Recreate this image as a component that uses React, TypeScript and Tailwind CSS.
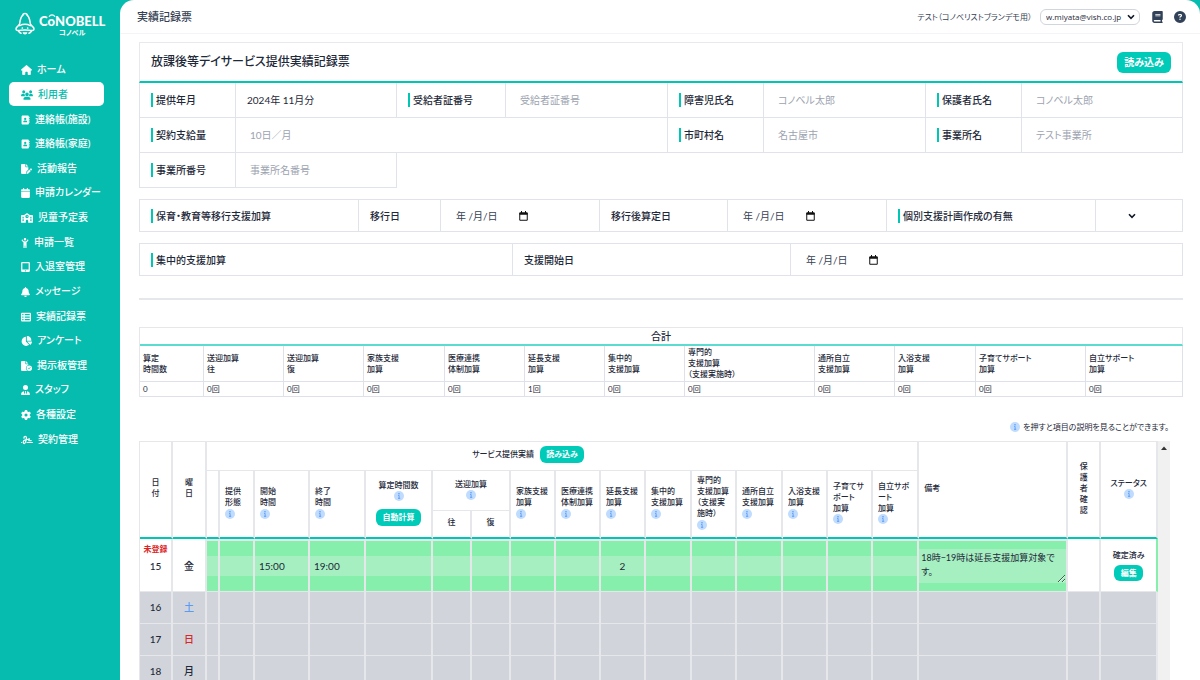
import { Fragment, useState, type ReactNode } from 'react';
import type { IconType } from 'react-icons';
import {
  FaAddressBook,
  FaBell,
  FaBook,
  FaCalendar,
  FaChartPie,
  FaChildReaching,
  FaCircleQuestion,
  FaFileCircleCheck,
  FaFilePen,
  FaGear,
  FaHouse,
  FaSchool,
  FaSignature,
  FaTableList,
  FaTabletScreenButton,
  FaUserTie,
  FaUsers,
} from 'react-icons/fa6';

const NAV: { label: string; icon: IconType; size: string; active?: boolean }[] = [
  { label: 'ホーム', icon: FaHouse, size: 'w-[11px]' },
  { label: '利用者', icon: FaUsers, size: 'w-3', active: true },
  { label: '連絡帳(施設)', icon: FaAddressBook, size: 'w-[9px]' },
  { label: '連絡帳(家庭)', icon: FaAddressBook, size: 'w-[9px]' },
  { label: '活動報告', icon: FaFilePen, size: 'w-[11px]' },
  { label: '申請カレンダー', icon: FaCalendar, size: 'w-[9px]' },
  { label: '児童予定表', icon: FaSchool, size: 'w-3' },
  { label: '申請一覧', icon: FaChildReaching, size: 'w-2' },
  { label: '入退室管理', icon: FaTabletScreenButton, size: 'w-[9px]' },
  { label: 'メッセージ', icon: FaBell, size: 'w-[9px]' },
  { label: '実績記録票', icon: FaTableList, size: 'w-[10px]' },
  { label: 'アンケート', icon: FaChartPie, size: 'w-[11px]' },
  { label: '掲示板管理', icon: FaFileCircleCheck, size: 'w-[11px]' },
  { label: 'スタッフ', icon: FaUserTie, size: 'w-[9px]' },
  { label: '各種設定', icon: FaGear, size: 'w-[10px]' },
  { label: '契約管理', icon: FaSignature, size: 'w-3' },
];

const TOTALS: { lines: string[]; value: string; width: number }[] = [
  { lines: ['算定', '時間数'], value: '0', width: 64 },
  { lines: ['送迎加算', '往'], value: '0回', width: 80 },
  { lines: ['送迎加算', '復'], value: '0回', width: 80 },
  { lines: ['家族支援', '加算'], value: '0回', width: 81 },
  { lines: ['医療連携', '体制加算'], value: '0回', width: 80 },
  { lines: ['延長支援', '加算'], value: '1回', width: 80 },
  { lines: ['集中的', '支援加算'], value: '0回', width: 80 },
  { lines: ['専門的', '支援加算', '（支援実施時）'], value: '0回', width: 130 },
  { lines: ['通所自立', '支援加算'], value: '0回', width: 80 },
  { lines: ['入浴支援', '加算'], value: '0回', width: 81 },
  { lines: ['子育てサポート', '加算'], value: '0回', width: 110 },
  { lines: ['自立サポート', '加算'], value: '0回', width: 97 },
];

const RECORD_WIDTHS = [33, 34, 13, 35, 55, 56, 67, 39, 39, 45, 45, 45, 46, 45, 46, 45, 45, 46, 149, 33, 57];

const ADDITIONS: string[][] = [
  ['家族支援', '加算'],
  ['医療連携', '体制加算'],
  ['延長支援', '加算'],
  ['集中的', '支援加算'],
  ['専門的', '支援加算', '（支援実', '施時）'],
  ['通所自立', '支援加算'],
  ['入浴支援', '加算'],
  ['子育てサ', 'ポート', '加算'],
  ['自立サポ', 'ート', '加算'],
];

const ENTRY_FIELDS: { name: string; value: string; center?: boolean }[] = [
  { name: '区分', value: '' },
  { name: '提供形態', value: '' },
  { name: '開始時間', value: '15:00' },
  { name: '終了時間', value: '19:00' },
  { name: '算定時間数', value: '' },
  { name: '送迎加算 往', value: '' },
  { name: '送迎加算 復', value: '' },
  { name: '家族支援加算', value: '' },
  { name: '医療連携体制加算', value: '' },
  { name: '延長支援加算', value: '2', center: true },
  { name: '集中的支援加算', value: '' },
  { name: '専門的支援加算', value: '' },
  { name: '通所自立支援加算', value: '' },
  { name: '入浴支援加算', value: '' },
  { name: '子育てサポート加算', value: '' },
  { name: '自立サポート加算', value: '' },
];

const CLOSED_DAYS = [
  { day: '16', weekday: '土', color: 'text-[#5a9cf4]' },
  { day: '17', weekday: '日', color: 'text-[#dc2626]' },
  { day: '18', weekday: '月', color: 'text-gray-800' },
];

function Lines({ items }: { items: string[] }) {
  return (
    <>
      {items.map((line, i) => (
        <Fragment key={i}>
          {i > 0 && <br />}
          {line}
        </Fragment>
      ))}
    </>
  );
}

function InfoIcon() {
  return (
    <svg viewBox="0 0 18 18" className="inline-block size-[10px] shrink-0" aria-hidden="true">
      <circle cx="9" cy="9" r="9" fill="#bfdbfe" />
      <circle cx="9" cy="5" r="1.3" fill="#4c93f7" />
      <path d="M7.4 8H9.200v5.200M7.200 13.200h4" fill="none" stroke="#4c93f7" strokeWidth="1.4" />
    </svg>
  );
}

function Chevron() {
  return (
    <svg viewBox="0 0 8 6" className="h-[6px] w-2" aria-hidden="true">
      <path d="M1 1.2 4 4.4 7 1.2" fill="none" stroke="#111827" strokeWidth="1.6" />
    </svg>
  );
}

function Logo() {
  return (
    <a href="#" className="flex h-10 items-start gap-1 pl-[15px] pt-3 text-white">
      <svg viewBox="0 0 60 70" className="h-6 w-5 shrink-0" aria-hidden="true">
        <g fill="none" stroke="#fff" strokeWidth="4.6" strokeLinecap="round" strokeLinejoin="round">
          <path d="M23 9c1-7 13-7 14 0" />
          <path d="M23 9C16 15 15 26 14 34 12 42 3 43 3 50c0 8 14 3 27 3s27 5 27-3c0-7-9-8-11-16-1-8-2-19-9-25" />
          <path d="M14 40c10-5 22-5 32 0" />
          <path d="M11 57c2 3 4 5 7 6M49 57c-2 3-4 5-7 6" />
        </g>
        <circle cx="22" cy="47" r="2.600" fill="#fff" />
        <circle cx="38" cy="47" r="2.600" fill="#fff" />
        <path d="M23 60h14c0 9-14 9-14 0Z" fill="#fff" />
      </svg>
      <span className="flex flex-col items-center pt-[2px]">
        <span className="flex items-baseline font-[Lato] text-[13px] leading-[14px] font-black">
          C
          <span className="relative">
            o
            <svg viewBox="0 0 14 8" className="absolute top-0 left-0 h-1 w-2" aria-hidden="true">
              <path d="M1 5.500c3-5 9-5 12 0" fill="none" stroke="#fff" strokeWidth="2.200" />
            </svg>
          </span>
          NOBELL
        </span>
        <span className="text-[7px] leading-[9px] font-bold">コノベル</span>
      </span>
    </a>
  );
}

function Label({ children, htmlFor }: { children: ReactNode; htmlFor?: string }) {
  return (
    <label htmlFor={htmlFor} className="flex items-center border-r border-b border-[#e1e3ea] pl-[11px] font-medium">
      <span className="border-l-2 border-[#00c7b5] pl-[3px] leading-[14px]">{children}</span>
    </label>
  );
}

function PlainLabel({ children, htmlFor }: { children: ReactNode; htmlFor: string }) {
  return (
    <label htmlFor={htmlFor} className="flex items-center border-r border-b border-[#e1e3ea] pl-[11px] font-medium">
      {children}
    </label>
  );
}

function TextCell({ id, placeholder, className = '' }: { id: string; placeholder: string; className?: string }) {
  return (
    <div className={`flex items-center border-r border-b border-[#e1e3ea] ${className}`}>
      <input id={id} placeholder={placeholder} className="w-full bg-transparent px-[14px] outline-none placeholder:text-[#9ca3af]" />
    </div>
  );
}

function DateCell({ id }: { id: string }) {
  return (
    <div className="flex items-center border-r border-b border-[#e1e3ea] pl-[15px]">
      <input id={id} defaultValue="年 /月/日" className="w-[63px] bg-transparent text-gray-700 outline-none" />
      <button type="button" aria-label="日付を選択">
        <svg viewBox="0 0 18 20" className="h-[10px] w-[9px]" aria-hidden="true">
          <path d="M1.500 4h15v14.500h-15Z" fill="none" stroke="#111" strokeWidth="2" />
          <path d="M1 3h16v4.500H1ZM4 0h2v4H4ZM12 0h2v4h-2Z" fill="#111" />
        </svg>
      </button>
    </div>
  );
}

const HEAD = 'border-r-2 border-b-2 border-r-[#e5e7eb] border-b-[#00c7b5] p-0 pb-[3px] font-medium';

export default function App() {
  const [note, setNote] = useState('18時−19時は延長支援加算対象です。');

  return (
    <div className="flex h-screen overflow-hidden bg-[#06bcae] font-['Lato','Noto_Sans_CJK_JP',sans-serif] text-[10px] leading-[14px] text-gray-800 [font-feature-settings:'palt']">
      <aside className="w-[120px] shrink-0">
        <Logo />
        <nav className="mt-[17px] grid h-[394px] auto-rows-fr px-[9px] pr-4">
          {NAV.map(({ label, icon: Icon, size, active }) => (
            <a
              key={label}
              href="#"
              className={`flex items-center gap-[5px] rounded-[5px] pl-3 font-medium whitespace-nowrap ${
                active ? 'bg-white text-[#06bcae]' : 'text-white'
              }`}
            >
              <Icon className={`mt-[2px] h-[10px] shrink-0 ${size}`} />
              {label}
            </a>
          ))}
        </nav>
      </aside>

      <main className="flex min-w-0 flex-1 flex-col rounded-t-[14px] bg-white">
        <header className="flex h-[34px] shrink-0 items-center border-b border-gray-100 pr-[14px] pl-[17px]">
          <h1 className="text-[11px] font-medium text-gray-700">実績記録票</h1>
          <span className="ml-auto text-[8px] text-gray-700">テスト（コノベリストブランデモ用）</span>
          <div className="relative ml-2">
            <select
              aria-label="アカウント"
              className="h-4 w-[100px] appearance-none rounded-md border border-gray-300 bg-white pl-[5px] font-['Open_Sans'] text-[8px] leading-[14px] text-gray-800"
            >
              <option>w.miyata@vish.co.jp</option>
            </select>
            <span className="pointer-events-none absolute top-[5px] right-[5px]">
              <Chevron />
            </span>
          </div>
          <button type="button" aria-label="マニュアル" className="ml-3 text-slate-700">
            <FaBook className="h-3 w-[11px]" />
          </button>
          <button type="button" aria-label="ヘルプ" className="ml-[11px] text-slate-700">
            <FaCircleQuestion className="size-3" />
          </button>
        </header>

        <div className="flex min-h-0 flex-1 flex-col pt-2 pr-[17px] pl-[19px]">
          <section className="shrink-0">
            <div className="flex h-[41px] items-center justify-between border border-b-2 border-[#e8e9ed] border-b-[#00c7b5] px-[11px]">
              <h2 className="text-[12px] font-medium">放課後等デイサービス提供実績記録票</h2>
              <button type="button" className="h-[21px] w-[54px] rounded-md bg-[#00cbb9] font-bold text-white">
                読み込み
              </button>
            </div>
            <div className="grid auto-rows-[35px] grid-cols-[96fr_161fr_109fr_162fr_96fr_162fr_96fr_161fr] border-l border-[#e1e3ea]">
              <Label htmlFor="month">提供年月</Label>
              <div className="flex items-center border-r border-b border-[#e1e3ea]">
                <input id="month" defaultValue="2024年 11月分" className="w-full bg-transparent px-[11px] outline-none" />
              </div>
              <Label htmlFor="certificate">受給者証番号</Label>
              <TextCell id="certificate" placeholder="受給者証番号" />
              <Label htmlFor="child">障害児氏名</Label>
              <TextCell id="child" placeholder="コノベル太郎" />
              <Label htmlFor="guardian">保護者氏名</Label>
              <TextCell id="guardian" placeholder="コノベル太郎" />
              <Label htmlFor="quota">契約支給量</Label>
              <TextCell id="quota" placeholder="10日／月" className="col-span-3" />
              <Label htmlFor="city">市町村名</Label>
              <TextCell id="city" placeholder="名古屋市" />
              <Label htmlFor="office">事業所名</Label>
              <TextCell id="office" placeholder="テスト事業所" />
              <Label htmlFor="office-no">事業所番号</Label>
              <TextCell id="office-no" placeholder="事業所名番号" />
            </div>
          </section>

          <section className="mt-[11px] grid h-[33px] shrink-0 grid-cols-[219fr_82fr_159fr_128fr_159fr_209fr_87fr] border-t border-l border-[#e1e3ea]">
            <Label>保育・教育等移行支援加算</Label>
            <PlainLabel htmlFor="move-date">移行日</PlainLabel>
            <DateCell id="move-date" />
            <PlainLabel htmlFor="after-date">移行後算定日</PlainLabel>
            <DateCell id="after-date" />
            <Label htmlFor="plan">個別支援計画作成の有無</Label>
            <div className="relative flex items-center justify-center border-r border-b border-[#e1e3ea]">
              <select id="plan" className="size-full appearance-none bg-transparent outline-none" />
              <span className="pointer-events-none absolute right-[46px]">
                <Chevron />
              </span>
            </div>
          </section>

          <section className="mt-[11px] grid h-[33px] shrink-0 grid-cols-[373fr_278fr_392fr] border-t border-l border-[#e1e3ea]">
            <Label>集中的支援加算</Label>
            <PlainLabel htmlFor="start-date">支援開始日</PlainLabel>
            <DateCell id="start-date" />
          </section>

          <hr className="mt-[22px] shrink-0 border-t-2 border-gray-200" />

          <table className="mt-[27px] w-full shrink-0 table-fixed border-separate border-spacing-0 border-t border-l border-[#e5e7eb] text-[8px] leading-[11px]">
            <colgroup>
              {TOTALS.map((t, i) => (
                <col key={i} style={{ width: t.width }} />
              ))}
            </colgroup>
            <thead>
              <tr>
                <th
                  colSpan={12}
                  className="h-[18px] border-r border-b-2 border-r-[#e5e7eb] border-b-[#5bdcd0] p-0 text-[10px] leading-[14px] font-medium"
                >
                  合計
                </th>
              </tr>
              <tr>
                {TOTALS.map((t, i) => (
                  <th key={i} className="h-9 border-r border-b border-[#dfe1e8] p-0 pl-[3px] text-left font-medium whitespace-nowrap">
                    <Lines items={t.lines} />
                  </th>
                ))}
              </tr>
            </thead>
            <tbody>
              <tr>
                {TOTALS.map((t, i) => (
                  <td key={i} className="h-[15px] border-r border-b border-[#dfe1e8] p-0 pl-[3px]">
                    {t.value}
                  </td>
                ))}
              </tr>
            </tbody>
          </table>

          <p className="mt-[23px] mr-[14px] flex shrink-0 items-center justify-end gap-[3px] text-[8px]">
            <InfoIcon />
            を押すと項目の説明を見ることができます。
          </p>

          <div className="mt-[7px] mr-[13px] flex min-h-0 flex-1">
            <div className="min-w-0 flex-1 overflow-y-auto [scrollbar-width:none]">
              <table className="w-full table-fixed border-separate border-spacing-0 border-t border-l border-[#e5e7eb] text-[8px] leading-[11px]">
                <colgroup>
                  {RECORD_WIDTHS.map((w, i) => (
                    <col key={i} style={{ width: w }} />
                  ))}
                </colgroup>
                <thead>
                  <tr className="h-[29px]">
                    <th rowSpan={3} className={HEAD}>
                      <Lines items={['日', '付']} />
                    </th>
                    <th rowSpan={3} className={HEAD}>
                      <Lines items={['曜', '日']} />
                    </th>
                    <th colSpan={16} className="border-r-2 border-b border-[#e5e7eb] p-0 pb-[3px] font-medium">
                      <div className="flex items-center justify-center gap-[6px] pr-[68px]">
                        サービス提供実績
                        <button type="button" className="h-[17px] w-11 rounded-md bg-[#00cbb9] font-bold text-white">
                          読み込み
                        </button>
                      </div>
                    </th>
                    <th rowSpan={3} className={`${HEAD} pl-[5px] text-left`}>
                      備考
                    </th>
                    <th rowSpan={3} className={HEAD}>
                      <Lines items={['保', '護', '者', '確', '認']} />
                    </th>
                    <th rowSpan={3} className={HEAD}>
                      <div className="flex flex-col items-center">
                        ステータス
                        <InfoIcon />
                      </div>
                    </th>
                  </tr>
                  <tr className="h-10">
                    <th rowSpan={2} className={HEAD} />
                    {[
                      ['提供', '形態'],
                      ['開始', '時間'],
                      ['終了', '時間'],
                    ].map((lines, i) => (
                      <th key={i} rowSpan={2} className={`${HEAD} pl-[5px] text-left`}>
                        <Lines items={lines} />
                        <span className="flex h-[11px] items-center">
                          <InfoIcon />
                        </span>
                      </th>
                    ))}
                    <th rowSpan={2} className={HEAD}>
                      <div className="flex flex-col items-center">
                        算定時間数
                        <InfoIcon />
                        <button type="button" className="mt-2 h-[17px] w-[45px] rounded-md bg-[#00cbb9] font-bold text-white">
                          自動計算
                        </button>
                      </div>
                    </th>
                    <th colSpan={2} className="border-r-2 border-b border-[#e5e7eb] p-0 pb-[3px] font-medium">
                      <div className="flex flex-col items-center">
                        送迎加算
                        <InfoIcon />
                      </div>
                    </th>
                    {ADDITIONS.map((lines, i) => (
                      <th key={i} rowSpan={2} className={`${HEAD} pl-[5px] text-left whitespace-nowrap`}>
                        <Lines items={lines} />
                        <span className="flex h-[11px] items-center">
                          <InfoIcon />
                        </span>
                      </th>
                    ))}
                  </tr>
                  <tr className="h-7">
                    <th className={HEAD}>往</th>
                    <th className={HEAD}>復</th>
                  </tr>
                </thead>
                <tbody>
                  <tr className="h-[53px] text-[10px]">
                    <td className="border-r-2 border-b border-[#e5e7eb] p-0 pt-1 text-center align-top font-medium">
                      <span className="block text-[8px] leading-3 font-bold text-[#dc2626]">未登録</span>
                      <span className="block leading-[22px]">15</span>
                    </td>
                    <td className="border-r-2 border-b border-[#e5e7eb] p-0 pt-[2px] text-center font-medium">金</td>
                    {ENTRY_FIELDS.map((f) => (
                      <td key={f.name} className="border-t-2 border-r-2 border-b border-[#e5e7eb] bg-[#86efac] p-0">
                        <input
                          aria-label={f.name}
                          defaultValue={f.value}
                          className={`block h-5 w-full bg-[#a6efc1] outline-none ${f.center ? 'text-center' : 'pl-1'}`}
                        />
                      </td>
                    ))}
                    <td className="border-t-2 border-r-2 border-b border-[#e5e7eb] bg-[#86efac] p-0">
                      <textarea
                        aria-label="備考"
                        value={note}
                        onChange={(e) => setNote(e.target.value)}
                        className="block h-[34px] w-full resize overflow-hidden bg-[#a6efc1] pt-[2px] pr-2 pl-[2px] text-[9px] leading-[14px] outline-none"
                      />
                    </td>
                    <td className="border-r-2 border-b border-[#e5e7eb] p-0" />
                    <td className="border-r-2 border-b border-r-[#86efac] border-b-[#e5e7eb] p-0">
                      <div className="flex flex-col items-center gap-1 text-[8px] leading-3 font-medium">
                        確定済み
                        <button type="button" className="h-4 w-[29px] rounded-md bg-[#00cbb9] font-bold text-white">
                          編集
                        </button>
                      </div>
                    </td>
                  </tr>
                  {CLOSED_DAYS.map((row) => (
                    <tr key={row.day} className="h-8 bg-[#d1d5db] text-[10px] font-medium">
                      <td className="border-r-2 border-b border-[#e5e7eb] p-0 text-center">{row.day}</td>
                      <td className={`border-r-2 border-b border-[#e5e7eb] p-0 text-center ${row.color}`}>{row.weekday}</td>
                      {RECORD_WIDTHS.slice(2).map((_, i) => (
                        <td key={i} className="border-r-2 border-b border-[#e5e7eb] p-0" />
                      ))}
                    </tr>
                  ))}
                </tbody>
              </table>
            </div>
            <div className="flex w-3 shrink-0 justify-center bg-[#f1f1f1] pt-[5px]">
              <svg viewBox="0 0 6 4" className="h-1 w-[6px]" aria-hidden="true">
                <path d="M0 4 3 .5 6 4Z" fill="#333" />
              </svg>
            </div>
          </div>
        </div>
      </main>
    </div>
  );
}
